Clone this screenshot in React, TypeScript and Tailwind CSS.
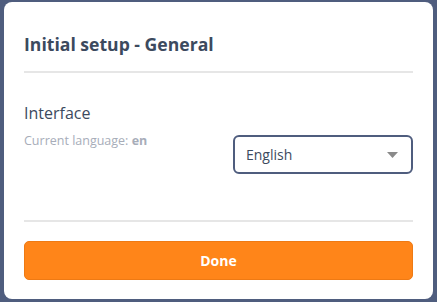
import React from "react";

export default function App() {
  return (
    <div className="w-[437px] h-[302px] bg-[#4f5d7e] pt-[2px] pl-[4px] pr-[4px] pb-[3px] font-['Open_Sans',sans-serif]">
      <div className="bg-white h-full rounded-[8px] px-[20px] flex flex-col">
        <h1 className="pt-[30px] text-[17.6px] font-bold leading-[24px] text-[#3c4a5e]">Initial setup - General</h1>
        <div className="mt-[15px] h-[2px] bg-[#e6e6e6]" />
        <div className="mt-[29px] flex justify-between">
          <div>
            <div className="text-[16px] leading-[22px] text-[#3c4a5e]">Interface</div>
            <div className="mt-[10px] text-[12.5px] leading-[14px] text-[#a7adb9]">
              Current language: <span className="font-bold">en</span>
            </div>
          </div>
          <div className="mt-[33px] w-[180px] h-[39px] border-2 border-[#4f5d7e] rounded-[6px] flex items-center justify-between pl-[11px] pr-[13px]">
            <span className="text-[14px] text-[#3c4a5e]">English</span>
            <svg width="11" height="6" viewBox="0 0 11 6"><path d="M0 0h11L5.5 6z" fill="#8a8a8a" /></svg>
          </div>
        </div>
        <div className="mt-[46px] h-[2px] bg-[#e6e6e6]" />
        <button className="mt-[19px] h-[39px] w-full rounded-[5px] bg-[#ff8519] border border-[#ee7a14] text-white font-bold text-[14px]">Done</button>
      </div>
    </div>
  );
}
